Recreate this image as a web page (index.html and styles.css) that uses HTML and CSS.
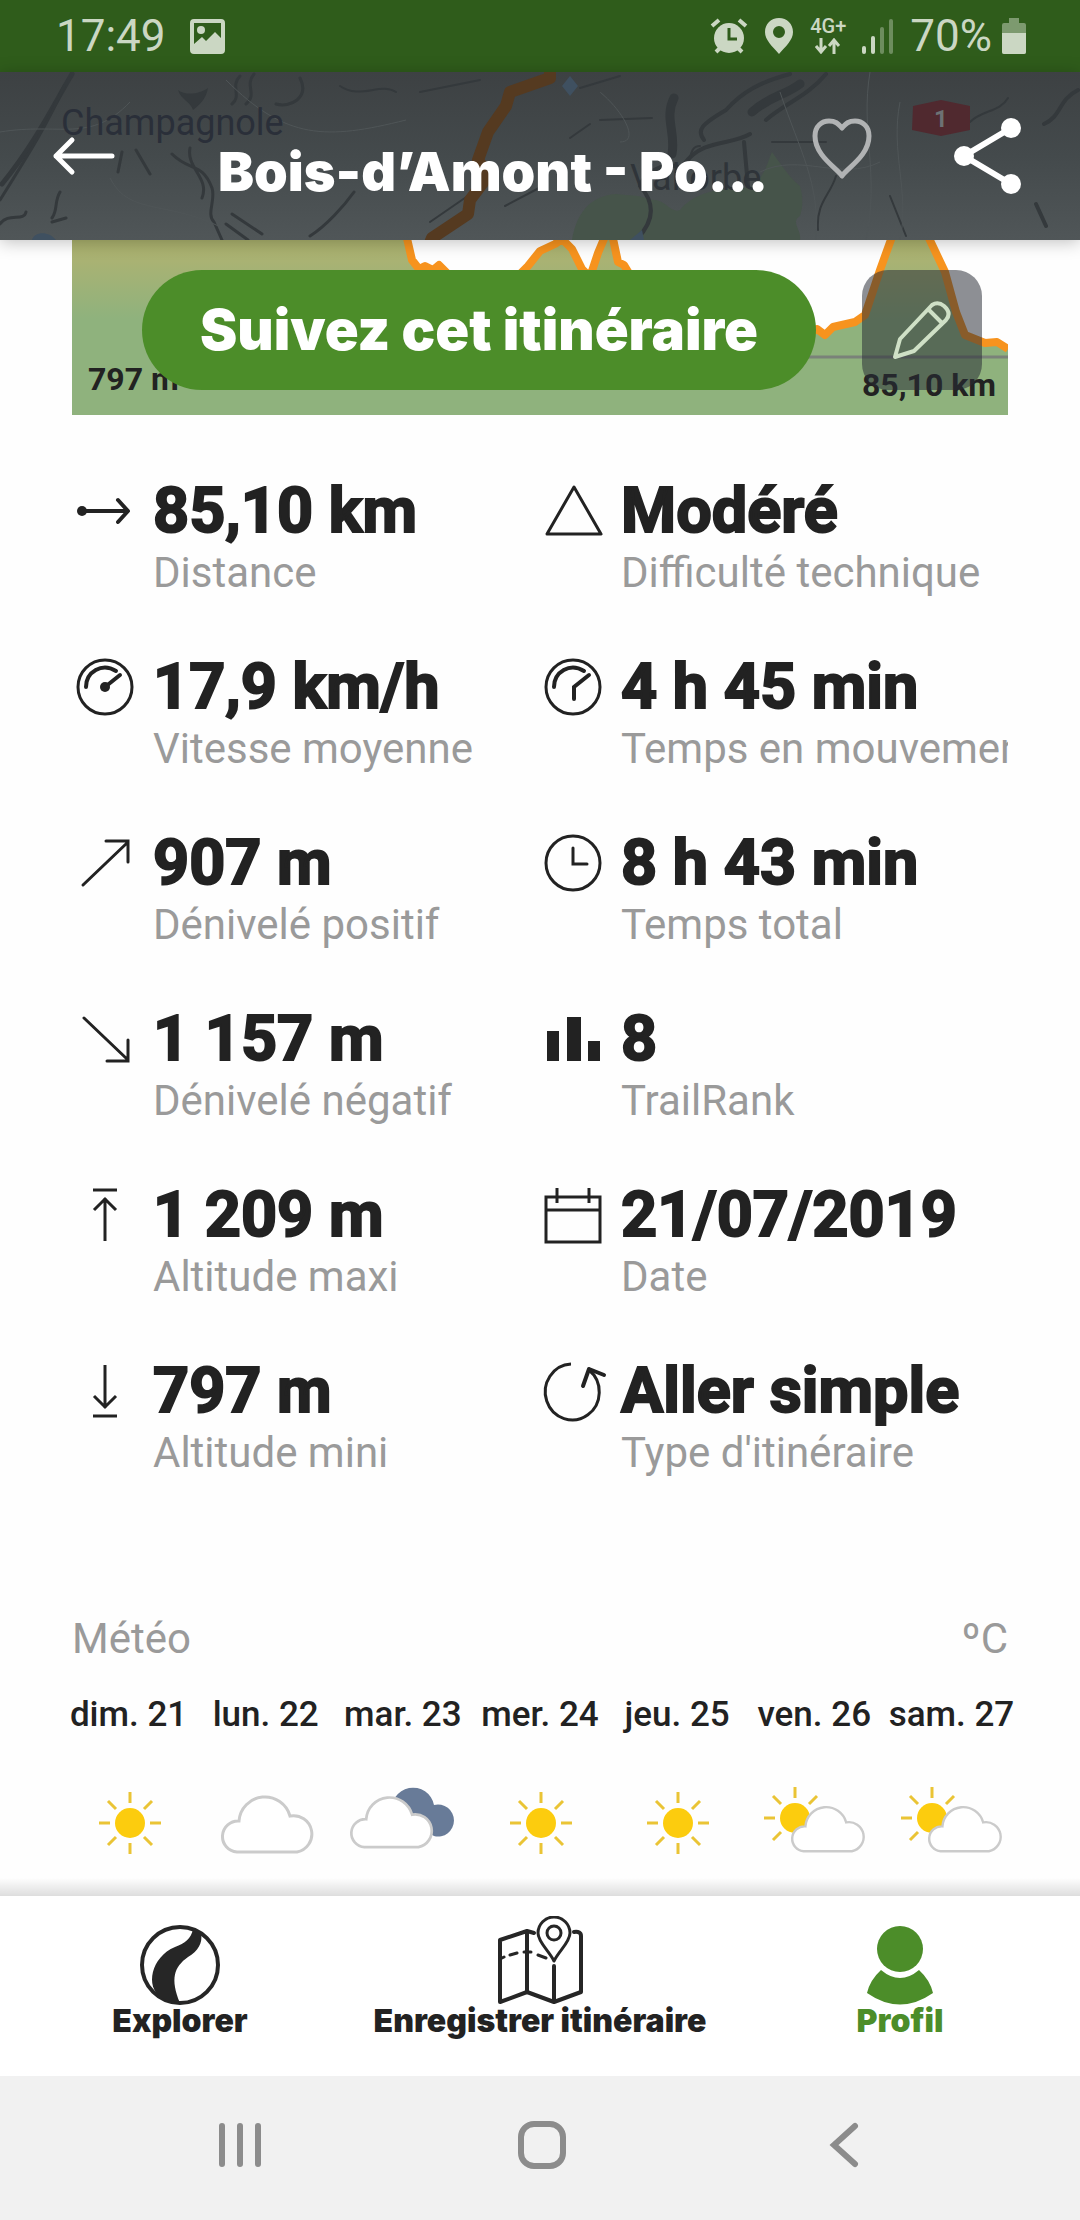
FILE: index.html
```html
<!DOCTYPE html>
<html lang="fr">
<head>
<meta charset="utf-8">
<meta name="viewport" content="width=device-width, initial-scale=1">
<title>Bois-d’Amont</title>
<link rel="stylesheet" href="styles.css">
</head>
<body>
<div class="status">
  <span class="clock">17:49</span>
  <svg class="photo" width="35" height="35" viewBox="0 0 35 35"><path fill="currentColor" fill-rule="evenodd" d="M4 0h27a4 4 0 0 1 4 4v27a4 4 0 0 1-4 4H4a4 4 0 0 1-4-4V4a4 4 0 0 1 4-4zM4 4v21l8-7 4 4 9-9 6 6V4z"/><circle cx="11" cy="11" r="4" fill="currentColor"/></svg>
  <div class="status-right">
    <svg width="38" height="36" viewBox="0 0 38 36"><circle cx="19" cy="20" r="15" fill="currentColor"/><path d="M2 8l7-6M36 8l-7-6M6 34l5-5M32 34l-5-5" stroke="currentColor" stroke-width="4"/><path d="M19 10v11h8" fill="none" stroke="#2f5c1b" stroke-width="3"/></svg>
    <svg width="30" height="36" viewBox="0 0 30 36"><path fill="currentColor" fill-rule="evenodd" d="M15 0c8 0 14 6 14 14 0 8-7 14-14 22C8 28 1 22 1 14 1 6 7 0 15 0zM15 8a6 6 0 1 0 0 12 6 6 0 0 0 0-12z"/></svg>
    <div class="network"><span>4G+</span><svg width="26" height="16" viewBox="0 0 26 16"><path d="M6 0v13M1 8l5 6 5-6M19 16V3M14 8l5-6 5 6" fill="none" stroke="currentColor" stroke-width="3"/></svg></div>
    <svg width="32" height="36" viewBox="0 0 32 36"><g fill="currentColor"><rect x="0" y="28" width="4" height="8" rx="2"/><rect x="9" y="18" width="4" height="18" rx="2"/><g opacity=".4"><rect x="18" y="9" width="4" height="27" rx="2"/><rect x="27" y="1" width="4" height="35" rx="2"/></g></g></svg>
    <span class="percent">70%</span>
    <svg width="24" height="36" viewBox="0 0 24 36"><path d="M2 5h5V0h10v5h5a2 2 0 0 1 2 2v27a2 2 0 0 1-2 2H2a2 2 0 0 1-2-2V7a2 2 0 0 1 2-2z" fill="currentColor" opacity=".5"/><path d="M0 15h24v19a2 2 0 0 1-2 2H2a2 2 0 0 1-2-2z" fill="currentColor"/></svg>
  </div>
</div>

<header class="topbar">
  <svg class="map" viewBox="0 0 1080 168" preserveAspectRatio="xMidYMid slice">
    <defs>
      <linearGradient id="haze" x2="0" y2="1"><stop offset="0" stop-color="#3d4143"/><stop offset=".5" stop-color="#444a4c"/><stop offset="1" stop-color="#505658"/></linearGradient>
    </defs>
    <rect width="1080" height="168" fill="url(#haze)"/>
    <path fill="#46544a" d="M572 168c4-24 16-44 44-46 14 2 22 0 34 6 16-2 20 14 30 10 12-16 40-24 70-22 16-12 18-28 22-36 10 14 18 26 28 34 4 14 2 24 0 30-10 6 2 14 0 24z"/>
    <g fill="none" stroke="#34393c" stroke-linejoin="round" stroke-linecap="round">
      <path stroke-width="5" d="M72 2C54 32 36 70 2 112M414 154"/>
      <path stroke-width="3" d="M64 14C50 48 30 80 0 128M0 152c8-12 24-2 26-12M52 150l14-4M60 120c-6 10-2 18-8 26M172 82c18 18 30 8 40 34 4 12-6 26 2 34l8 18M190 76c-4 20 20 30 12 50M226 152l22 16M232 142l30 20M310 164c16-10 34-30 44-44M240 4c-10 10 2 20-8 28M254 2c-10 12 4 20-8 30M300 6c10 20-10 30-24 26M122 80l-4 20M136 78l14 24"/>
      <path stroke-width="9" d="M674 26c-10 20 2 34-2 56M800 12c-16 12-30 12-48 28"/>
      <path stroke-width="4" d="M790 2c-30 8-48 18-64 36-24 14-30 20-22 30M826 2c-18 22-42 30-60 46M640 112c10-16 30-24 44-14M640 114c16 18 14 36-4 54M684 92c20-26 46-18 66-30M744 70l4 44M1078 18c-20 10-16 26-34 34M1036 132l10 22"/>
      <path stroke-width="2" d="M700 74c-14 0-6 22-20 26M772 70h54M836 104c-6 20-20 26-18 54M580 16l40-12M600 48l52-2M570 66l20-14M890 124l16 40M970 50c12-12 30-10 38-24M340 14c20 14 40-4 56 6M420 20l60-12M505 134l34-18M430 150l58-40"/>
    </g>
    <g fill="none" stroke="#4f5557" stroke-width="1">
      <path d="M0 60c60-10 90 12 130-30M226 8c60 60 100 60 180 40M110 106c20 40 60 20 120 54M780 20c20 60 40 90 36 148M870 0c-10 60 10 100-4 168M900 30c-10 50 10 90 0 138M600 20c24 20 40 50 20 50M760 100c40-20 80 10 120-10"/>
    </g>
    <path fill="#34393c" d="M178 18c8 6 22 4 30-2-2 12-10 18-15 22-2-8-12-10-15-20z"/>
    <path fill="#3f5060" d="M32 168c2-8 16-10 24 0zM562 14l8-10 8 10-8 10zM630 168l12-10 2 10z"/>
    <path fill="none" stroke="#553a20" stroke-width="12" stroke-linejoin="round" d="M550-4v10l-40 14-4 14-18 26-10 28 10 16-18 24-2 14-36 24-4 10"/>
    <path fill="#50292f" d="M913 34l28-6 29 6v24l-29 6-29-6z"/>
    <text x="934" y="55" class="map-road">1</text>
    <text x="61" y="63" class="map-town">Champagnole</text>
    <text x="630" y="118" class="map-village">Vallorbe</text>
  </svg>
  <button class="icon-button back" aria-label="Retour"><svg width="64" height="40" viewBox="0 0 64 40"><path d="M60 20H4M20 4L4 20l16 16" fill="none" stroke="#fff" stroke-width="5" stroke-linecap="round" stroke-linejoin="round"/></svg></button>
  <h1 class="title">Bois-d’Amont - Po...</h1>
  <button class="icon-button heart" aria-label="Favori"><svg width="60" height="62" viewBox="0 0 60 62"><path d="M30 58C25 50 3 38 3 18 3 8 10 3 17 3c8 0 10 4 13 7 3-3 5-7 13-7 7 0 14 5 14 15 0 20-22 32-27 40z" fill="none" stroke="#b1b3b4" stroke-width="5" stroke-linejoin="round"/></svg></button>
  <button class="icon-button share" aria-label="Partager"><svg width="68" height="76" viewBox="0 0 68 76"><path d="M57 10L10 38l47 28" fill="none" stroke="#fff" stroke-width="6"/><g fill="#fff"><circle cx="57" cy="10" r="10"/><circle cx="10" cy="38" r="10"/><circle cx="57" cy="66" r="10"/></g></svg></button>
</header>

<main class="content">
  <section class="profile">
    <svg class="chart" viewBox="0 0 936 175" preserveAspectRatio="none">
      <defs><linearGradient id="relief" x2="0" y2="1"><stop offset="0" stop-color="#abb16d"/><stop offset=".12" stop-color="#a9b273"/><stop offset=".45" stop-color="#8fb27d"/><stop offset="1" stop-color="#8fb27d"/></linearGradient></defs>
      <path fill="url(#relief)" d="M0 0H335L340 20 347 29 353 26 361 30 367 25 376 34 446 36 456 26 468 11 483 4 490 1 500 9 510 29 518 37 526 13 534 0H540L546 22 552 25 558 35 648 90 738 92 745 89 753 95 761 87 783 82 793 75 808 30 819 0H857L873 32 884 72 893 95 913 103 925 102 936 109V175H0z"/>
      <path fill="none" stroke="#f7931e" stroke-width="8" stroke-linejoin="round" d="M334-6L340 20 347 29 353 26 361 30 367 25 376 34 446 36 456 26 468 11 483 4 490-1 500 9 510 29 518 37 526 13 534-6M540-6L546 22 552 25 558 35 648 90 738 92 745 89 753 95 761 87 783 82 793 75 808 30 821-6M855-6L873 32 884 72 893 95 913 103 925 102 936 109"/>
      <path stroke="#7a8279" stroke-width="3" d="M600 117h336"/>
    </svg>
    <span class="low">797 m</span>
    <span class="length">85,10 km</span>
    <div class="actions">
      <button class="follow">Suivez cet itinéraire</button>
      <button class="edit" aria-label="Modifier"><svg width="60" height="60" viewBox="0 0 60 60"><path d="M3 57l5-18L40 5q6-4 12 1 8 7 2 14L22 51zM36 9l15 15" fill="none" stroke="#cfe0c6" stroke-width="4" stroke-linejoin="round"/></svg></button>
    </div>
  </section>

  <dl class="stats">
    <div class="stat"><svg class="glyph" viewBox="0 0 60 60"><path d="M8 30h44M43 19l10 11-10 11" fill="none" stroke="#222" stroke-width="4" stroke-linecap="round" stroke-linejoin="round"/><circle cx="7" cy="30" r="5" fill="#222"/></svg><dd>85,10 km</dd><dt>Distance</dt></div>
    <div class="stat"><svg class="glyph" viewBox="0 0 60 60"><path d="M31 6L58 53H4z" fill="none" stroke="#222" stroke-width="3" stroke-linejoin="round"/></svg><dd>Modéré</dd><dt>Difficulté technique</dt></div>
    <div class="stat"><svg class="glyph" viewBox="0 0 60 60"><g fill="none" stroke="#222" stroke-width="3" stroke-linecap="round"><circle cx="30" cy="30" r="27"/><path stroke-width="4" d="M11 30c0-15 16-25 30-16M30 30l15-12"/></g><circle cx="30" cy="30" r="5" fill="#222"/></svg><dd>17,9 km/h</dd><dt>Vitesse moyenne</dt></div>
    <div class="stat"><svg class="glyph" viewBox="0 0 60 60"><g fill="none" stroke="#222" stroke-width="3" stroke-linecap="round"><circle cx="30" cy="30" r="27"/><path stroke-width="4" d="M11 30c0-15 16-25 30-16M31 42V30l15-12"/></g></svg><dd>4 h 45 min</dd><dt>Temps en mouvement</dt></div>
    <div class="stat"><svg class="glyph" viewBox="0 0 60 60"><path d="M8 52L52 10M31 8h22v21" fill="none" stroke="#222" stroke-width="3" stroke-linecap="round"/></svg><dd>907 m</dd><dt>Dénivelé positif</dt></div>
    <div class="stat"><svg class="glyph" viewBox="0 0 60 60"><g fill="none" stroke="#222" stroke-width="3" stroke-linecap="round"><circle cx="30" cy="30" r="27"/><path d="M30 15v16h14"/></g></svg><dd>8 h 43 min</dd><dt>Temps total</dt></div>
    <div class="stat"><svg class="glyph" viewBox="0 0 60 60"><path d="M9 9l43 41M32 52h21V31" fill="none" stroke="#222" stroke-width="3" stroke-linecap="round"/></svg><dd>1 157 m</dd><dt>Dénivelé négatif</dt></div>
    <div class="stat"><svg class="glyph" viewBox="0 0 60 60"><path d="M4 22h12v30H4zM24 8h14v44H24zM45 32h12v20H45z" fill="#222"/></svg><dd>8</dd><dt>TrailRank</dt></div>
    <div class="stat"><svg class="glyph" viewBox="0 0 60 60"><path d="M18 5h24M30 56V13M19 25l11-11 11 11" fill="none" stroke="#222" stroke-width="3"/></svg><dd>1 209 m</dd><dt>Altitude maxi</dt></div>
    <div class="stat"><svg class="glyph" viewBox="0 0 60 60"><path d="M3 12h54v45H3zM3 25h54M14 3v15M46 3v15" fill="none" stroke="#222" stroke-width="3"/></svg><dd>21/07/2019</dd><dt>Date</dt></div>
    <div class="stat"><svg class="glyph" viewBox="0 0 60 60"><path d="M18 55h24M30 4v43M19 35l11 11 11-11" fill="none" stroke="#222" stroke-width="3"/></svg><dd>797 m</dd><dt>Altitude mini</dt></div>
    <div class="stat"><svg class="glyph" viewBox="0 0 60 60"><path d="M28 3A27 28 0 1 0 46 9" fill="none" stroke="#222" stroke-width="3"/><path d="M40 25l6-17 15 6" fill="none" stroke="#222" stroke-width="4" stroke-linecap="round" stroke-linejoin="round"/></svg><dd>Aller simple</dd><dt>Type d'itinéraire</dt></div>
  </dl>

  <section class="weather">
    <div class="weather-head"><h2>Météo</h2><span>ºC</span></div>
    <svg class="symbols" width="0" height="0">
      <defs>
        <g id="sun"><g stroke="#eac435" stroke-width="3"><path d="M0-31v11M0 31V20M-31 0h11M31 0H20M-22-22l8 8M22-22l-8 8M-22 22l8-8M22 22l-8-8"/></g><circle r="15" fill="#fccc0e"/></g>
        <path id="cloud" fill="#fff" stroke="#cbcbcb" stroke-width="3" d="M16 59h60a18 18 0 1 0-7-36A26 26 0 0 0 18 28A15 15 0 0 0 16 59z"/>
        <g id="sunny-cloud"><g transform="translate(37 33)"><path stroke="#eac435" stroke-width="3" d="M0-31v11M-31 0h11M-22-22l8 8M22-22l-8 8M-22 22l8-8"/><circle r="15" fill="#fccc0e"/></g><use href="#cloud" transform="translate(33 19) scale(.8)"/></g>
      </defs>
    </svg>
    <ul class="days">
      <li><span>dim. 21</span><svg viewBox="0 0 112 76"><use href="#sun" x="57" y="38"/></svg></li>
      <li><span>lun. 22</span><svg viewBox="0 0 112 76"><use href="#cloud" x="11" y="8"/></svg></li>
      <li><span>mar. 23</span><svg viewBox="0 0 112 76"><path fill="#687b98" d="M45 28a21 21 0 0 1 42-8 16 16 0 1 1 0 31z"/><use href="#cloud" transform="translate(3 9) scale(.9)"/></svg></li>
      <li><span>mer. 24</span><svg viewBox="0 0 112 76"><use href="#sun" x="57" y="38"/></svg></li>
      <li><span>jeu. 25</span><svg viewBox="0 0 112 76"><use href="#sun" x="57" y="38"/></svg></li>
      <li><span>ven. 26</span><svg viewBox="0 0 112 76"><use href="#sunny-cloud"/></svg></li>
      <li><span>sam. 27</span><svg viewBox="0 0 112 76"><use href="#sunny-cloud"/></svg></li>
    </ul>
  </section>
</main>

<nav class="tabs">
  <a href="#explorer"><svg width="90" height="90" viewBox="0 0 90 90"><circle cx="45" cy="49" r="38" fill="none" stroke="#262626" stroke-width="4"/><path fill="#262626" d="M58 13c-2 10-8 14-18 18-24 10-30 40-14 50 6 4 12 7 19 6-10-24-6-36 8-46 10-6 15-14 13-24z"/></svg><span>Explorer</span></a>
  <a href="#enregistrer"><svg width="90" height="90" viewBox="0 0 90 90"><g fill="none" stroke="#262626" stroke-width="4" stroke-linejoin="round" stroke-linecap="round"><path d="M39 17l-7-2L5 24v62l27-10 27 10 27-10V20q0-5-7-4M32 16v60M59 50v36"/><path d="M5 43l4-2M15 39l7-2M29 36h7M43 39l8 3" stroke-width="3"/><path d="M59 45C54 35 43 26 43 17a16 16 0 0 1 32 0c0 9-11 18-16 28z" stroke-width="3"/><circle cx="59" cy="17" r="7" stroke-width="3"/></g></svg><span>Enregistrer itinéraire</span></a>
  <a href="#profil" class="active"><svg width="90" height="90" viewBox="0 0 90 90"><g fill="currentColor"><circle cx="45" cy="33" r="23"/><path d="M26 54q19 16 38 0 11 10 14 23-33 23-66 0 3-13 14-23z"/></g></svg><span>Profil</span></a>
</nav>

<div class="system">
  <button aria-label="Applications récentes"><svg width="48" height="48" viewBox="0 0 48 48"><path d="M6 5v38M24 5v38M42 5v38" stroke="#8c8c8c" stroke-width="6" stroke-linecap="round"/></svg></button>
  <button aria-label="Accueil"><svg width="48" height="48" viewBox="0 0 48 48"><rect x="3" y="3" width="42" height="42" rx="13" fill="none" stroke="#8c8c8c" stroke-width="6"/></svg></button>
  <button aria-label="Précédent"><svg width="48" height="48" viewBox="0 0 48 48"><path d="M35 5L14 24l21 19" fill="none" stroke="#8c8c8c" stroke-width="6" stroke-linecap="round"/></svg></button>
</div>
</body>
</html>
```
FILE: styles.css
```css
* { box-sizing: border-box; }

body {
  margin: 0;
  height: 100vh;
  display: flex;
  flex-direction: column;
  background: #fefefe;
  color: #222;
  font-family: Roboto, "Liberation Sans", sans-serif;
}

button {
  border: 0;
  padding: 0;
  background: none;
  font: inherit;
  color: inherit;
}

svg { display: block; flex: none; }

.status {
  flex: none;
  height: 72px;
  padding: 0 54px 0 56px;
  display: flex;
  align-items: center;
  gap: 24px;
  background: #2f5c1b;
  color: #cbd7c3;
  font-size: 44px;
}

.status-right {
  margin-left: auto;
  display: flex;
  align-items: center;
  gap: 16px;
}

.network {
  display: flex;
  flex-direction: column;
  align-items: center;
  gap: 4px;
  font-size: 20px;
  line-height: 16px;
  font-weight: 500;
}

.percent { margin-right: -6px; }

.topbar {
  flex: none;
  position: relative;
  z-index: 2;
  height: 168px;
  padding: 0 58px 0 52px;
  display: flex;
  align-items: center;
  box-shadow: 0 2px 16px rgba(0, 0, 0, .25);
}

.map {
  position: absolute;
  inset: 0;
  width: 100%;
  height: 100%;
}

.map-town { font-size: 36px; fill: #2a2f39; }
.map-village { font-size: 36px; fill: #2f3439; }
.map-road { font-size: 24px; font-weight: 700; fill: #6d7274; }

.icon-button { position: relative; }
.heart { margin-right: 82px; padding-bottom: 14px; }

.title {
  position: relative;
  flex: 1;
  min-width: 0;
  margin: 32px 0 0;
  padding-left: 102px;
  overflow: hidden;
  white-space: nowrap;
  color: #fff;
  font: 900 54px/72px Inter, "Open Sans", sans-serif;
}

.content {
  flex: 1;
  min-height: 0;
  overflow: hidden;
  padding: 0 72px;
}

.profile {
  position: relative;
  height: 175px;
}

.chart { width: 100%; height: 100%; }

.low, .length {
  position: absolute;
  font-size: 32px;
  line-height: 40px;
  font-weight: 700;
}

.low { left: 16px; bottom: 16px; }
.length { right: 12px; bottom: 10px; }

.actions {
  position: absolute;
  inset: 30px 26px auto 70px;
  display: flex;
  justify-content: space-between;
}

.follow {
  width: 674px;
  height: 120px;
  border-radius: 60px;
  background: #4c8d29;
  color: #fff;
  font: 900 56px/72px Inter, "Open Sans", sans-serif;
}

.edit {
  width: 120px;
  height: 120px;
  border-radius: 26px;
  background: rgba(39, 43, 53, .53);
  display: grid;
  place-items: center;
}

.stats {
  margin: 58px 0 138px;
  display: grid;
  grid-template-columns: 1fr 1fr;
  row-gap: 52px;
}

.stat {
  display: grid;
  grid-template-columns: 81px minmax(0, 1fr);
  overflow: hidden;
}

.glyph {
  width: 60px;
  height: 60px;
  margin: 8px 3px;
  grid-row: span 2;
  overflow: visible;
}

.stat dd, .stat dt { margin: 0; white-space: nowrap; }

.stat dd {
  font-size: 63px;
  line-height: 76px;
  font-weight: 700;
  -webkit-text-stroke: 2px #222;
}

.stat dt {
  font-size: 42px;
  line-height: 48px;
  color: #9a9a9a;
}

.weather-head {
  display: flex;
  justify-content: space-between;
  font-size: 42px;
  line-height: 48px;
  color: #9a9a9a;
}

.weather-head h2 { margin: 0; font: inherit; }

.symbols { position: absolute; }

.days {
  list-style: none;
  margin: 32px -12px 0;
  padding: 0;
  display: grid;
  grid-template-columns: repeat(7, 1fr);
}

.days li {
  display: flex;
  flex-direction: column;
  align-items: center;
  gap: 50px;
  font-size: 35px;
  line-height: 40px;
  font-weight: 500;
  white-space: nowrap;
}

.days svg { width: 112px; height: 76px; }

.tabs {
  flex: none;
  position: relative;
  height: 180px;
  display: grid;
  grid-template-columns: repeat(3, 1fr);
  background: #fff;
}

.tabs::before {
  content: "";
  position: absolute;
  inset: -18px 0 auto;
  height: 18px;
  background: linear-gradient(rgba(0, 0, 0, 0), rgba(0, 0, 0, .13));
}

.tabs a {
  display: flex;
  flex-direction: column;
  align-items: center;
  padding-top: 20px;
  color: #222;
  text-decoration: none;
  font: 900 32px/30px Inter, "Open Sans", sans-serif;
}

.tabs a.active { color: #4c8d29; }

.system {
  flex: none;
  height: 144px;
  padding: 0 85px 6px 89px;
  display: grid;
  grid-template-columns: repeat(3, 1fr);
  align-items: center;
  justify-items: center;
  background: #f1f1f1;
}
```
